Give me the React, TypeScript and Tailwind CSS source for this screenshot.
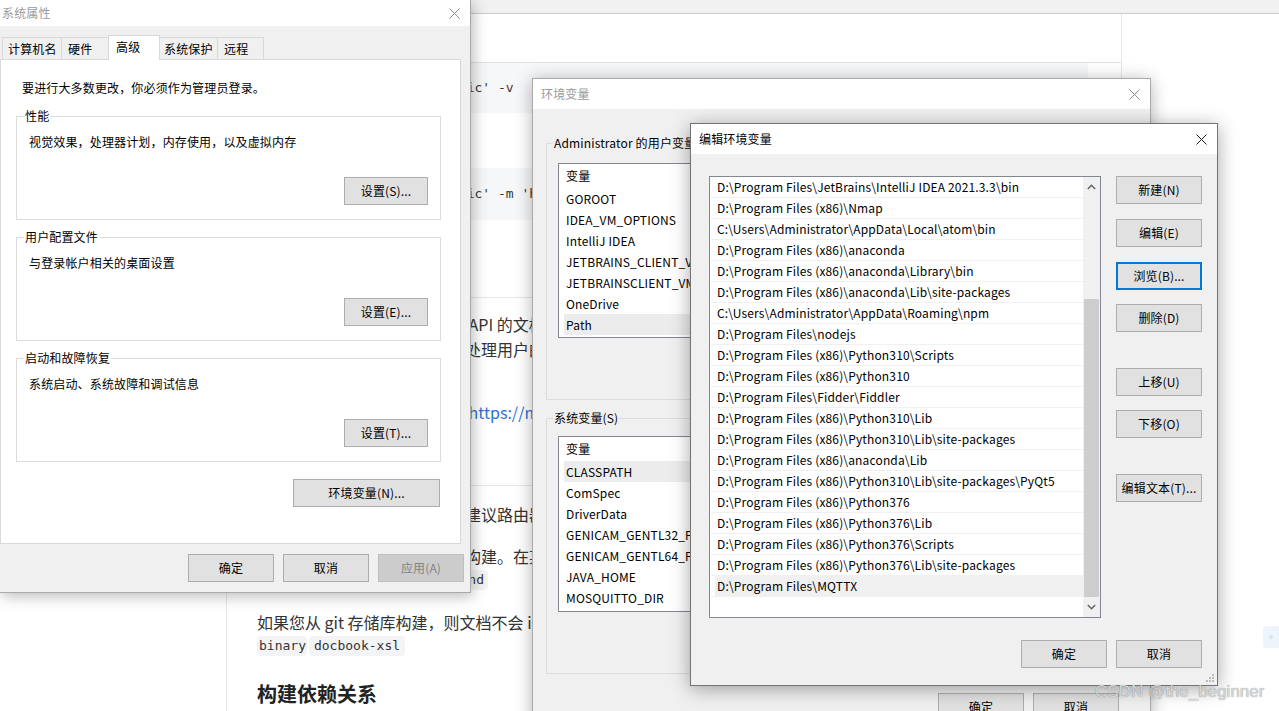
import React from "react";

function CloseX({ color }: { color: string }) {
  return (
    <svg width="11" height="11" viewBox="0 0 11 11" className="block">
      <path d="M0.5 0.5L10.5 10.5M10.5 0.5L0.5 10.5" stroke={color} strokeWidth="1" fill="none" />
    </svg>
  );
}

function Chevron({ up }: { up?: boolean }) {
  return (
    <svg width="9" height="6" viewBox="0 0 9 6" className="block">
      <path d={up ? "M0.8 5L4.5 1.3L8.2 5" : "M0.8 1L4.5 4.7L8.2 1"} stroke="#606060" strokeWidth="1.4" fill="none" />
    </svg>
  );
}

function Btn({
  children,
  w,
  disabled,
  focused,
  className,
}: {
  children: React.ReactNode;
  w: string;
  disabled?: boolean;
  focused?: boolean;
  className?: string;
}) {
  const look = disabled
    ? "bg-[#cccccc] border border-[#bfbfbf] text-[#838383]"
    : focused
    ? "bg-[#e1e1e1] border-2 border-[#0078d7] text-black"
    : "bg-[#e1e1e1] border border-[#adadad] text-black";
  return (
    <div className={`flex items-center justify-center h-[28px] shrink-0 leading-[16px] ${look} ${w} ${className ?? ""}`}>
      {children}
    </div>
  );
}

function SysGroup({ label, text, btn, className }: { label: string; text: string; btn: string; className?: string }) {
  return (
    <div className={`relative w-[425px] h-[104px] shrink-0 border border-[#dcdcdc] flex flex-col pl-[12px] pt-[17px] ${className ?? ""}`}>
      <span className="absolute left-[7px] top-[-9px] bg-white px-[1px] leading-[16px]">{label}</span>
      <div className="leading-[16px]">{text}</div>
      <Btn w="w-[84px]" className="self-end mr-[12px] mt-[27px]">
        {btn}
      </Btn>
    </div>
  );
}

const tabs = [
  { t: "计算机名", w: "w-[60px]", pl: "pl-[5px]", first: true },
  { t: "硬件", w: "w-[48px]", pl: "pl-[6px]" },
  { t: "高级", w: "w-[52px]", pl: "pl-[7px]", sel: true },
  { t: "系统保护", w: "w-[59px]", pl: "pl-[4px]" },
  { t: "远程", w: "w-[47px]", pl: "pl-[6px]" },
];

function SysProps() {
  return (
    <div className="absolute left-0 top-0 w-[471px] h-[593px] bg-[#f0f0f0] border-r border-b border-[#a9a9a9] shadow-[2px_3px_14px_rgba(0,0,0,0.28)] flex flex-col text-[12px] tracking-[0.15px] text-black">
      <div className="h-[26px] shrink-0 bg-white flex items-center justify-between pl-[2px] pr-[10px]">
        <span className="text-[#9a9a9a] leading-[16px]">系统属性</span>
        <CloseX color="#8c8c8c" />
      </div>
      <div className="h-[33px] shrink-0 flex items-end pl-[2px]">
        {tabs.map((t) => (
          <div
            key={t.t}
            className={`${t.w} ${t.pl} ${t.first ? "" : "-ml-px"} ${
              t.sel ? "h-[25px] -mb-px relative z-10 bg-white pb-[3px]" : "h-[22px] bg-[#f0f0f0]"
            } border-t border-l border-r border-[#d9d9d9] flex items-center leading-[16px] whitespace-nowrap`}
          >
            {t.t}
          </div>
        ))}
      </div>
      <div className="w-[461px] h-[485px] shrink-0 bg-white border border-[#d9d9d9] flex flex-col pl-[15px] pt-[20px]">
        <div className="pl-[6px] leading-[16px]">要进行大多数更改，你必须作为管理员登录。</div>
        <SysGroup className="mt-[20px]" label="性能" text="视觉效果，处理器计划，内存使用，以及虚拟内存" btn="设置(S)..." />
        <SysGroup className="mt-[17px]" label="用户配置文件" text="与登录帐户相关的桌面设置" btn="设置(E)..." />
        <SysGroup className="mt-[17px]" label="启动和故障恢复" text="系统启动、系统故障和调试信息" btn="设置(T)..." />
        <Btn w="w-[147px]" className="self-end mr-[20px] mt-[17px]">
          环境变量(N)...
        </Btn>
      </div>
      <div className="flex gap-[9px] pl-[188px] mt-[10px]">
        <Btn w="w-[86px]">确定</Btn>
        <Btn w="w-[86px]">取消</Btn>
        <Btn w="w-[86px]" disabled>
          应用(A)
        </Btn>
      </div>
    </div>
  );
}

function EnvList({ rows, sel, h }: { rows: string[]; sel: string; h: string }) {
  return (
    <div className={`border border-[#828790] bg-white ${h} flex flex-col overflow-hidden`}>
      <div className="h-[24px] shrink-0 flex items-center pl-[7px] leading-[16px]">变量</div>
      {rows.map((r) => (
        <div key={r} className="h-[21px] shrink-0 pl-[5px] flex">
          <div className={`flex-1 flex items-center pl-[2px] leading-[16px] whitespace-nowrap ${r === sel ? "bg-[#ececec]" : ""}`}>
            {r}
          </div>
        </div>
      ))}
    </div>
  );
}

function EnvGroup({ label, className, children }: { label: string; className: string; children: React.ReactNode }) {
  return (
    <div className={`relative border border-[#dcdcdc] px-[11px] shrink-0 ${className}`}>
      <span className="absolute left-[6px] top-[-9px] bg-[#f0f0f0] px-[1px] leading-[16px] whitespace-nowrap">{label}</span>
      {children}
    </div>
  );
}

function EnvWindow() {
  return (
    <div className="absolute left-[532px] top-[78px] w-[619px] h-[660px] bg-[#f0f0f0] border border-[#aaaaaa] shadow-[0_2px_16px_rgba(0,0,0,0.3)] flex flex-col text-[12px] tracking-[0.15px] text-black">
      <div className="h-[30px] shrink-0 bg-white flex items-center justify-between pl-[8px] pr-[10px]">
        <span className="text-[#9a9a9a] leading-[16px]">环境变量</span>
        <CloseX color="#8c8c8c" />
      </div>
      <div className="flex flex-col px-[13px] pt-[34px]">
        <EnvGroup label="Administrator 的用户变量(U)" className="h-[257px] pt-[19px]">
          <EnvList
            h="h-[175px]"
            sel="Path"
            rows={["GOROOT", "IDEA_VM_OPTIONS", "IntelliJ IDEA", "JETBRAINS_CLIENT_VM_OPTIONS", "JETBRAINSCLIENT_VM_OPTIONS", "OneDrive", "Path"]}
          />
        </EnvGroup>
        <EnvGroup label="系统变量(S)" className="h-[256px] pt-[17px] mt-[18px]">
          <EnvList
            h="h-[176px]"
            sel="CLASSPATH"
            rows={["CLASSPATH", "ComSpec", "DriverData", "GENICAM_GENTL32_PATH", "GENICAM_GENTL64_PATH", "JAVA_HOME", "MOSQUITTO_DIR"]}
          />
        </EnvGroup>
      </div>
      <div className="flex justify-end gap-[9px] pr-[31px] mt-[19px]">
        <Btn w="w-[86px]">确定</Btn>
        <Btn w="w-[86px]">取消</Btn>
      </div>
    </div>
  );
}

const paths = [
  "D:\\Program Files\\JetBrains\\IntelliJ IDEA 2021.3.3\\bin",
  "D:\\Program Files (x86)\\Nmap",
  "C:\\Users\\Administrator\\AppData\\Local\\atom\\bin",
  "D:\\Program Files (x86)\\anaconda",
  "D:\\Program Files (x86)\\anaconda\\Library\\bin",
  "D:\\Program Files (x86)\\anaconda\\Lib\\site-packages",
  "C:\\Users\\Administrator\\AppData\\Roaming\\npm",
  "D:\\Program Files\\nodejs",
  "D:\\Program Files (x86)\\Python310\\Scripts",
  "D:\\Program Files (x86)\\Python310",
  "D:\\Program Files\\Fidder\\Fiddler",
  "D:\\Program Files (x86)\\Python310\\Lib",
  "D:\\Program Files (x86)\\Python310\\Lib\\site-packages",
  "D:\\Program Files (x86)\\anaconda\\Lib",
  "D:\\Program Files (x86)\\Python310\\Lib\\site-packages\\PyQt5",
  "D:\\Program Files (x86)\\Python376",
  "D:\\Program Files (x86)\\Python376\\Lib",
  "D:\\Program Files (x86)\\Python376\\Scripts",
  "D:\\Program Files (x86)\\Python376\\Lib\\site-packages",
  "D:\\Program Files\\MQTTX",
];

function EditWindow() {
  return (
    <div className="absolute left-[690px] top-[123px] w-[528px] h-[563px] bg-[#f0f0f0] border border-[#737373] shadow-[0_3px_18px_rgba(0,0,0,0.35)] flex flex-col text-[12px] tracking-[0.15px] text-black">
      <div className="h-[30px] shrink-0 bg-white flex items-center justify-between pl-[8px] pr-[10px]">
        <span className="leading-[16px]">编辑环境变量</span>
        <CloseX color="#1a1a1a" />
      </div>
      <div className="flex pl-[18px] pt-[22px]">
        <div className="w-[392px] h-[442px] shrink-0 border border-[#828790] bg-white flex">
          <div className="flex-1 flex flex-col">
            {paths.map((p, i) => (
              <div key={p} className="h-[21px] shrink-0 ml-[1px] border-b border-[#f0f0f0] flex">
                <div
                  className={`flex-1 ml-[4px] pl-[2px] flex items-center leading-[16px] whitespace-nowrap ${
                    i === paths.length - 1 ? "bg-[#f0f0f0]" : ""
                  }`}
                >
                  {p}
                </div>
              </div>
            ))}
          </div>
          <div className="w-[17px] shrink-0 bg-[#f0f0f0] flex flex-col items-center">
            <div className="h-[20px] shrink-0 flex items-center justify-center">
              <Chevron up />
            </div>
            <div className="h-[102px] shrink-0" />
            <div className="w-[15px] h-[298px] shrink-0 bg-[#cdcdcd]" />
            <div className="h-[20px] shrink-0 flex items-center justify-center">
              <Chevron />
            </div>
          </div>
        </div>
        <div className="flex flex-col ml-[15px]">
          <Btn w="w-[86px]">新建(N)</Btn>
          <Btn w="w-[86px]" className="mt-[15px]">
            编辑(E)
          </Btn>
          <Btn w="w-[86px]" className="mt-[15px]" focused>
            浏览(B)...
          </Btn>
          <Btn w="w-[86px]" className="mt-[14px]">
            删除(D)
          </Btn>
          <Btn w="w-[86px]" className="mt-[36px]">
            上移(U)
          </Btn>
          <Btn w="w-[86px]" className="mt-[14px]">
            下移(O)
          </Btn>
          <Btn w="w-[86px]" className="mt-[36px]">
            编辑文本(T)...
          </Btn>
        </div>
      </div>
      <div className="flex justify-end gap-[9px] pr-[15px] mt-[22px]">
        <Btn w="w-[86px]">确定</Btn>
        <Btn w="w-[86px]">取消</Btn>
      </div>
      <svg width="9" height="9" viewBox="0 0 9 9" className="absolute right-[3px] bottom-[3px]">
        <rect x="7" y="1" width="2" height="2" fill="#bdbdbd" />
        <rect x="4" y="4" width="2" height="2" fill="#bdbdbd" />
        <rect x="7" y="4" width="2" height="2" fill="#bdbdbd" />
        <rect x="1" y="7" width="2" height="2" fill="#bdbdbd" />
        <rect x="4" y="7" width="2" height="2" fill="#bdbdbd" />
        <rect x="7" y="7" width="2" height="2" fill="#bdbdbd" />
      </svg>
    </div>
  );
}

function WebPage() {
  const mono = "font-['DejaVu_Sans_Mono',monospace] text-[13px] text-[#333]";
  return (
    <div className="absolute inset-0 flex flex-col bg-white">
      <div className="h-[14px] shrink-0 bg-[#f1f1f1] border-b border-[#cccccc]" />
      <div className="flex flex-1 min-h-0">
        <div className="w-[227px] shrink-0 border-r border-[#e3e6eb]" />
        <div className="w-[895px] shrink-0 border-r border-[#e3e6eb] flex flex-col text-[16px] text-[#333]">
          <div className="h-[49px] shrink-0 border-b border-[#dde1e6]" />
          <div className="pl-[30px] pr-[33px] flex flex-col whitespace-nowrap">
            <div className={`h-[50px] shrink-0 bg-[#f6f7f9] flex items-center pl-[14px] ${mono}`}>pip3 install 'tracing-basic' -v</div>
            <div className={`h-[52px] shrink-0 mt-[55px] bg-[#f6f7f9] flex items-center pl-[14px] ${mono}`}>
              meson test -C _build 'basic' -m 'help'
            </div>
            <div className="h-px shrink-0 mt-[77px] bg-[#e3e6eb]" />
            <div className="mt-[14px] leading-[25px]">
              <div>本库同时提供了有关全部公开 API 的文档，方便开发者查阅和使用。</div>
              <div>服务端会在收到请求之后负责处理用户的输入并返回相应的结果。</div>
            </div>
            <div className="mt-[38px] leading-[25px]">
              更多信息请参阅本项目官网： <span className="text-[#2f6fd6]">https://mesonbuild.com/</span>
            </div>
            <div className="h-px shrink-0 mt-[60px] bg-[#e3e6eb]" />
            <div className="mt-[16px] leading-[24px]">对于大多数用户和发行版我们建议路由器按照本文档进行配置。</div>
            <div className="mt-[19px] leading-[23px]">
              <div>本项目使用介子构建系统进行构建。在某些平台上可能需要额外的依赖。</div>
              <div className="h-[23px] flex items-center">
                <span>可以通过下列选项来扩展</span>
                <span className={`bg-[#f3f4f5] rounded-[4px] px-[4px] leading-[20px] ${mono}`}>extend</span>
              </div>
            </div>
            <div className="mt-[20px] leading-[23px]">
              <div>如果您从 git 存储库构建，则文档不会 installed 时生成，需要安装 xsltproc</div>
              <div className="h-[23px] flex items-center gap-[2px]">
                <span className={`bg-[#f3f4f5] rounded-[4px] pl-[2px] pr-[1px] leading-[20px] ${mono}`}>binary</span>
                <span className={`bg-[#f3f4f5] rounded-[4px] px-[5px] leading-[20px] ${mono}`}>docbook-xsl</span>
              </div>
            </div>
            <div className="mt-[23px] leading-[28px] text-[20px] font-bold text-[#222]">构建依赖关系</div>
          </div>
        </div>
        <div className="flex-1 relative">
          <div className="absolute right-0 top-[612px] w-[16px] h-[22px] bg-[#eef4fc] rounded-l-[3px] flex items-center justify-center">
            <div className="w-[4px] h-[4px] rounded-full bg-[#d5e3f5]" />
          </div>
        </div>
      </div>
    </div>
  );
}

export default function App() {
  return (
    <div className="relative w-[1279px] h-[711px] overflow-hidden bg-white font-['Noto_Sans_CJK_SC',sans-serif]">
      <WebPage />
      <SysProps />
      <EnvWindow />
      <EditWindow />
      <div className="absolute left-[1095px] top-[682px] text-[17px] leading-[20px] font-['Liberation_Sans',sans-serif] text-[#d6d6d6] [text-shadow:0_0_1px_rgba(0,0,0,0.45)] whitespace-nowrap">
        CSDN @the_beginner
      </div>
    </div>
  );
}
